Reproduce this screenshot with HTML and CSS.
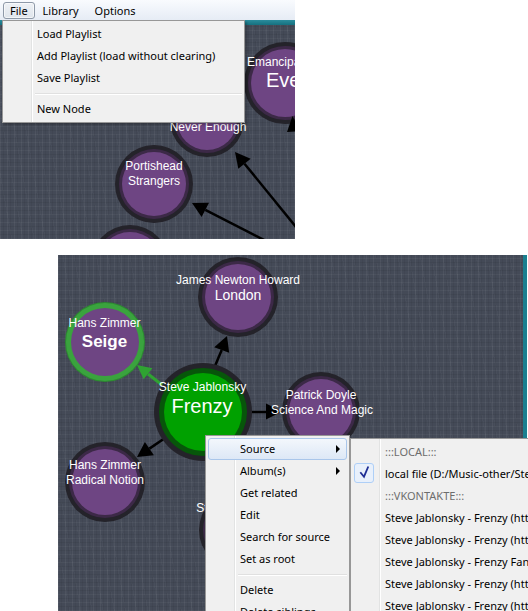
FILE: index.html
```html
<!DOCTYPE html>
<html>
<head>
<meta charset="utf-8">
<title>Playlist graph</title>
<link rel="stylesheet" href="styles.css">
</head>
<body>
<div class="shot shot-top">
  <div class="menubar">
    <span class="mb-item mb-open">File</span>
    <span class="mb-item">Library</span>
    <span class="mb-item">Options</span>
  </div>
  <div class="teal-strip"></div>
  <svg class="canvas canvas-top" width="295" height="214" viewBox="0 25 295 214">
    <g class="edge">
      <line x1="300" y1="232" x2="244.5" y2="163.7"/>
      <polygon points="235,152 250.7,158.7 238.3,168.7"/>
      <line x1="270" y1="243" x2="205.3" y2="209.9"/>
      <polygon points="192,203 209,202.8 201.6,217"/>
      <line x1="296" y1="130" x2="304" y2="165"/>
    </g>
    <g class="node">
      <circle cx="285" cy="83" r="41" class="ring-outer"/>
      <circle cx="285" cy="83" r="37" class="ring-inner"/>
      <circle cx="285" cy="83" r="34" class="fill-purple"/>
    </g>
    <g class="edge">
      <polygon points="292.5,116 287,132 300,131"/>
    </g>
    <text class="nt nt-start" x="247" y="66">Emancipator</text>
    <text class="nt nt-start nt-big" x="266" y="87">Eve</text>
    <g class="node">
      <circle cx="207" cy="120" r="37" class="ring-outer"/>
      <circle cx="207" cy="120" r="33" class="ring-inner"/>
      <circle cx="207" cy="120" r="30" class="fill-purple"/>
    </g>
    <text class="nt" x="208" y="131">Never Enough</text>
    <g class="node">
      <circle cx="154" cy="184" r="39" class="ring-outer"/>
      <circle cx="154" cy="184" r="35" class="ring-inner"/>
      <circle cx="154" cy="184" r="32" class="fill-purple"/>
    </g>
    <text class="nt" x="154" y="170">Portishead</text>
    <text class="nt" x="154" y="185">Strangers</text>
    <g class="node">
      <circle cx="130" cy="264" r="39" class="ring-outer"/>
      <circle cx="130" cy="264" r="35" class="ring-inner"/>
      <circle cx="130" cy="264" r="32" class="fill-purple"/>
    </g>
  </svg>
  <div class="menu dropdown">
    <div class="menu-item">Load Playlist</div>
    <div class="menu-item">Add Playlist (load without clearing)</div>
    <div class="menu-item">Save Playlist</div>
    <div class="menu-sep"></div>
    <div class="menu-item">New Node</div>
  </div>
</div>

<div class="shot shot-bottom">
  <svg class="canvas canvas-bottom" width="465" height="356" viewBox="58 255 465 356">
    <g class="edge edge-green">
      <line x1="166" y1="388" x2="148" y2="374"/>
      <polygon points="137,365 152.4,368.2 143.6,379.2"/>
    </g>
    <g class="edge">
      <line x1="215" y1="366" x2="221.7" y2="350"/>
      <polygon points="227,336 229.2,352.8 214.2,347.2"/>
      <line x1="252" y1="412" x2="267" y2="412"/>
      <polygon points="282,411.5 266,403.5 266,419.5"/>
      <line x1="168" y1="436" x2="149.4" y2="448.6"/>
      <polygon points="137,457 144.9,442 153.9,455.2"/>
    </g>

    <g class="node">
      <circle cx="238" cy="297" r="40" class="ring-outer"/>
      <circle cx="238" cy="297" r="36" class="ring-inner"/>
      <circle cx="238" cy="297" r="33" class="fill-purple"/>
    </g>
    <text class="nt" x="238" y="283.5">James Newton Howard</text>
    <text class="nt nt-mid" x="238" y="299.5">London</text>

    <g class="node">
      <circle cx="105" cy="342" r="40" class="ring-green-edge"/>
      <circle cx="105" cy="342" r="39" class="ring-green"/>
      <circle cx="105" cy="342" r="34" class="fill-purple"/>
    </g>
    <text class="nt" x="104.5" y="327">Hans Zimmer</text>
    <text class="nt nt-bold" x="104.5" y="347">Seige</text>

    <g class="node">
      <circle cx="203" cy="412" r="49" class="ring-outer"/>
      <circle cx="203" cy="412" r="44" class="ring-darkgreen"/>
      <circle cx="203" cy="412" r="39" class="fill-green"/>
    </g>
    <text class="nt" x="202.5" y="390.5">Steve Jablonsky</text>
    <text class="nt nt-big" x="202" y="413">Frenzy</text>

    <g class="node">
      <circle cx="321" cy="411" r="39" class="ring-outer"/>
      <circle cx="321" cy="411" r="35" class="ring-inner"/>
      <circle cx="321" cy="411" r="32" class="fill-purple"/>
    </g>
    <text class="nt" x="321" y="398.5">Patrick Doyle</text>
    <text class="nt" x="322" y="413.5">Science And Magic</text>

    <g class="node">
      <circle cx="105" cy="482" r="40" class="ring-outer"/>
      <circle cx="105" cy="482" r="36" class="ring-inner"/>
      <circle cx="105" cy="482" r="33" class="fill-purple"/>
    </g>
    <text class="nt" x="105" y="468.5">Hans Zimmer</text>
    <text class="nt" x="105" y="483.5">Radical Notion</text>

    <g class="node">
      <circle cx="239" cy="530" r="40" class="ring-outer"/>
      <circle cx="239" cy="530" r="36" class="ring-inner"/>
      <circle cx="239" cy="530" r="33" class="fill-purple"/>
    </g>
    <text class="nt" x="240" y="512">Steve Jablonsky</text>
  </svg>
  <div class="teal-side"></div>

  <div class="menu context">
    <div class="menu-item menu-hot has-sub">Source</div>
    <div class="menu-item has-sub">Album(s)</div>
    <div class="menu-item">Get related</div>
    <div class="menu-item">Edit</div>
    <div class="menu-item">Search for source</div>
    <div class="menu-item">Set as root</div>
    <div class="menu-sep"></div>
    <div class="menu-item">Delete</div>
    <div class="menu-item">Delete siblings</div>
  </div>

  <div class="menu submenu">
    <div class="menu-item menu-disabled">:::LOCAL:::</div>
    <div class="menu-item menu-checked">
      <span class="check-box"><svg width="20" height="20" viewBox="0 0 20 20"><polyline points="6.3,9.2 10,13.7 14.3,3.5" class="check-mark"/></svg></span>
      local file (D:/Music-other/Steve Jablonsky/Frenzy.mp3)
    </div>
    <div class="menu-item menu-disabled">:::VKONTAKTE:::</div>
    <div class="menu-item">Steve Jablonsky - Frenzy (http://vk.com/audio1)</div>
    <div class="menu-item">Steve Jablonsky - Frenzy (http://vk.com/audio2)</div>
    <div class="menu-item">Steve Jablonsky - Frenzy Fanfare</div>
    <div class="menu-item">Steve Jablonsky - Frenzy (http://vk.com/audio3)</div>
    <div class="menu-item">Steve Jablonsky - Frenzy (http://vk.com/audio4)</div>
  </div>
</div>
</body>
</html>
```

FILE: styles.css
```css
html, body {
  margin: 0;
  padding: 0;
  background: #ffffff;
  overflow: hidden;
  width: 528px;
  height: 611px;
}

body {
  font-family: "Noto Sans", "Open Sans", sans-serif;
  font-size: 11px;
  color: #000;
}

.shot {
  position: relative;
}

.shot-top {
  width: 295px;
  height: 239px;
  display: flex;
  flex-direction: column;
}

.menubar {
  height: 20px;
  display: flex;
  align-items: stretch;
  padding: 2px 0 1px 3px;
  box-sizing: border-box;
  background: linear-gradient(#f9fbfe, #e6ecf5);
}

.mb-item {
  display: flex;
  align-items: center;
  padding: 0 6px;
  border: 1px solid transparent;
  border-radius: 3px;
  line-height: 15px;
}

.mb-item + .mb-item {
  padding: 0 7px;
}

.mb-open {
  border-color: #8e99a8;
  background: linear-gradient(#eef1f5, #dfe5ec);
  box-shadow: inset 0 0 0 1px rgba(255,255,255,0.6);
}

.teal-strip {
  height: 5px;
  background: linear-gradient(#2b8c9c, #15707f);
}

.canvas {
  display: block;
  flex: none;
  background-color: #444a57;
  background-image:
    repeating-linear-gradient(90deg, rgba(255,255,255,0.05) 0 1px, transparent 1px 3px, rgba(0,0,0,0.05) 3px 4px, transparent 4px 7px),
    repeating-linear-gradient(0deg, rgba(255,255,255,0.04) 0 1px, transparent 1px 4px, rgba(0,0,0,0.06) 4px 5px, transparent 5px 8px),
    repeating-linear-gradient(80deg, rgba(255,255,255,0.025) 0 1px, transparent 1px 11px);
}

.shot-bottom {
  margin: 16px 0 0 58px;
  width: 469px;
  height: 356px;
  display: flex;
}

.teal-side {
  width: 4px;
  background: #1a7f8f;
}

/* graph */
.edge line {
  stroke: #000;
  stroke-width: 2.5;
}
.edge polygon {
  fill: #000;
}
.edge-green line {
  stroke: #2fa332;
  stroke-width: 3;
}
.edge-green polygon {
  fill: #2fa332;
}

.ring-outer { fill: #24232a; }
.ring-inner { fill: #3c2947; }
.fill-purple { fill: #6e4583; }
.ring-green-edge { fill: #2c8a30; }
.ring-green { fill: #3aa33e; }
.ring-darkgreen { fill: #07560a; }
.fill-green { fill: #00a100; }

.nt {
  font-family: "Liberation Sans", Arial, sans-serif;
  font-size: 12px;
  fill: #ffffff;
  text-anchor: middle;
}
.nt-start { text-anchor: start; }
.nt-mid { font-size: 14px; }
.nt-big { font-size: 20px; }
.nt-bold { font-size: 17px; font-weight: bold; }

/* menus */
.menu {
  position: absolute;
  box-sizing: border-box;
  background: #f0f0f0;
  border: 1px solid #979797;
  padding: 2px;
  box-shadow: 2px 2px 2px rgba(0,0,0,0.25);
}

.menu::before {
  content: "";
  position: absolute;
  top: 0;
  bottom: 0;
  left: 28px;
  width: 1px;
  background: #e2e3e3;
  box-shadow: 1px 0 0 #ffffff;
}

.dropdown {
  left: 2px;
  top: 20px;
  width: 243px;
}

.context {
  left: 147px;
  top: 180px;
  width: 145px;
}

.submenu {
  left: 292px;
  top: 183px;
  width: 240px;
  box-shadow: none;
}

.menu-item {
  position: relative;
  height: 22px;
  line-height: 21px;
  padding-left: 32px;
  white-space: nowrap;
  overflow: hidden;
  box-sizing: border-box;
}

.menu-hot {
  border: 1px solid #a9c6ea;
  border-radius: 3px;
  padding-left: 31px;
  line-height: 19px;
  background: linear-gradient(#f3f7fc, #dde8f6);
}

.has-sub::after {
  content: "";
  position: absolute;
  right: 7px;
  top: 7px;
  border-left: 4px solid #000;
  border-top: 4px solid transparent;
  border-bottom: 4px solid transparent;
}
.menu-hot.has-sub::after {
  right: 6px;
  top: 6px;
}

.menu-disabled {
  color: #6d6d6d;
}

.menu-sep {
  height: 1px;
  margin: 4px 0 3px 30px;
  background: #e0e0e0;
  border-bottom: 1px solid #ffffff;
}

.check-box {
  position: absolute;
  left: 1px;
  top: 0;
  width: 20px;
  height: 20px;
  box-sizing: border-box;
  border: 1px solid #aecff7;
  border-radius: 3px;
  background: #e8f0fb;
}
.check-box svg {
  position: absolute;
  left: -1px;
  top: -1px;
}
.check-mark {
  fill: none;
  stroke: #1f2e94;
  stroke-width: 1.8;
}
```
